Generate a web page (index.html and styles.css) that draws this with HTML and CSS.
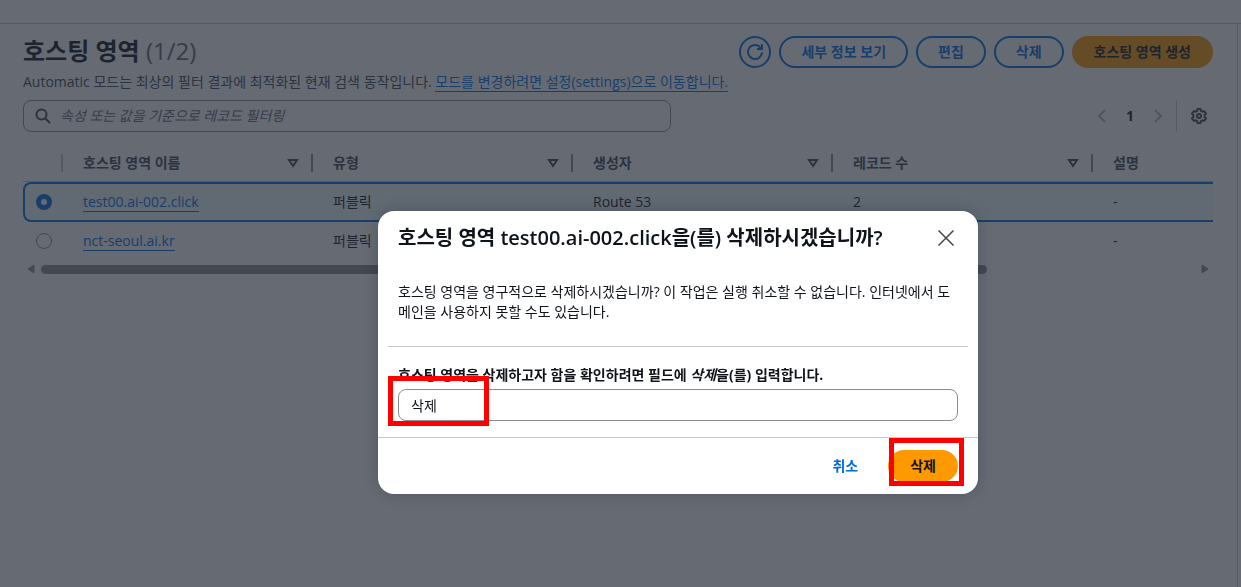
FILE: index.html
```html
<!DOCTYPE html>
<html lang="ko">
<head>
    <meta charset="utf-8">
    <title>호스팅 영역</title>
    <link rel="stylesheet" href="styles.css">
</head>
<body>

<div class="topbar"></div>

<main class="panel">
    <div class="header">
        <div class="header-text">
            <h1>호스팅 영역 <span class="counter">(1/2)</span></h1>
            <p>Automatic 모드는 최상의 필터 결과에 최적화된 현재 검색 동작입니다. <a href="#">모드를 변경하려면 설정(settings)으로 이동합니다.</a></p>
        </div>
        <div class="actions">
            <button class="btn btn-icon" type="button" aria-label="새로 고침">
                <svg width="16" height="16" viewBox="0 0 16 16"><path d="M15 8.500A7 7 0 1 1 13 3.100L15 5M15 0v5h-5"/></svg>
            </button>
            <button class="btn" type="button">세부 정보 보기</button>
            <button class="btn" type="button">편집</button>
            <button class="btn" type="button">삭제</button>
            <button class="btn btn-primary" type="button">호스팅 영역 생성</button>
        </div>
    </div>

    <div class="tools">
        <label class="filter">
            <svg width="16" height="16" viewBox="0 0 16 16"><circle cx="6.5" cy="6.5" r="5"/><path d="M10.2 10.2L15 15"/></svg>
            <input type="text" placeholder="속성 또는 값을 기준으로 레코드 필터링" aria-label="레코드 필터링">
        </label>
        <div class="pagination">
            <button class="page-arrow" type="button" aria-label="이전"><svg width="16" height="16" viewBox="0 0 16 16"><path d="M11 2L5 8l6 6"/></svg></button>
            <button class="page-number" type="button">1</button>
            <button class="page-arrow" type="button" aria-label="다음"><svg width="16" height="16" viewBox="0 0 16 16"><path d="M5 2l6 6-6 6"/></svg></button>
            <button class="settings" type="button" aria-label="설정">
                <svg width="16" height="16" viewBox="0 0 16 16"><path d="M6.600 1h2.800l.500 1.900 1.300.700 1.900-.500L15 5.500 13.600 7v2L15 10.500l-1.900 2.400-1.900-.500-1.300.700-.500 1.900H6.600l-.500-1.900-1.300-.700-1.900.500L1 10.500 2.400 9V7L1 5.500l1.900-2.400 1.900.500 1.300-.700z"/><circle cx="8" cy="8" r="2"/></svg>
            </button>
        </div>
    </div>

    <div class="table-wrap">
        <table>
            <colgroup>
                <col class="col-select"><col class="col-name"><col class="col-mid"><col class="col-mid"><col class="col-mid"><col>
            </colgroup>
            <thead>
                <tr>
                    <th class="select"><div class="th"></div></th>
                    <th><div class="th">호스팅 영역 이름<svg width="12" height="10" viewBox="0 0 12 10"><path d="M2 2h8L6 8z"/></svg></div></th>
                    <th><div class="th">유형<svg width="12" height="10" viewBox="0 0 12 10"><path d="M2 2h8L6 8z"/></svg></div></th>
                    <th><div class="th">생성자<svg width="12" height="10" viewBox="0 0 12 10"><path d="M2 2h8L6 8z"/></svg></div></th>
                    <th><div class="th">레코드 수<svg width="12" height="10" viewBox="0 0 12 10"><path d="M2 2h8L6 8z"/></svg></div></th>
                    <th><div class="th">설명</div></th>
                </tr>
            </thead>
            <tbody>
                <tr class="selected">
                    <td class="select"><input type="radio" name="zone" aria-label="test00.ai-002.click" checked></td>
                    <td><a href="#">test00.ai-002.click</a></td>
                    <td>퍼블릭</td>
                    <td>Route 53</td>
                    <td>2</td>
                    <td>-</td>
                </tr>
                <tr>
                    <td class="select"><input type="radio" name="zone" aria-label="nct-seoul.ai.kr"></td>
                    <td><a href="#">nct-seoul.ai.kr</a></td>
                    <td>퍼블릭</td>
                    <td></td>
                    <td></td>
                    <td>-</td>
                </tr>
            </tbody>
        </table>
    </div>
    <div class="scrollbar">
        <svg width="8" height="10" viewBox="0 0 8 10"><path d="M7 1v8L1 5z"/></svg>
        <div class="track"><div class="thumb"></div></div>
        <svg width="8" height="10" viewBox="0 0 8 10"><path d="M1 1v8l6-4z"/></svg>
    </div>
</main>

<div class="backdrop">
    <form class="modal" role="dialog" aria-labelledby="modal-title">
        <div class="modal-header">
            <h2 id="modal-title">호스팅 영역 test00.ai-002.click을(를) 삭제하시겠습니까?</h2>
            <button class="close" type="button" aria-label="닫기"><svg width="16" height="16" viewBox="0 0 16 16"><path d="M.5.5l15 15M15.5.5l-15 15"/></svg></button>
        </div>
        <p class="modal-text">호스팅 영역을 영구적으로 삭제하시겠습니까? 이 작업은 실행 취소할 수 없습니다. 인터넷에서 도메인을 사용하지 못할 수도 있습니다.</p>
        <div class="confirm">
            <label for="confirm">호스팅 영역을 삭제하고자 함을 확인하려면 필드에 <i>삭제</i>을(를) 입력합니다.</label>
            <div class="field">
                <input type="text" id="confirm" value="삭제">
                <span class="mark mark-input"></span>
            </div>
        </div>
        <div class="modal-footer">
            <button class="btn btn-link" type="button">취소</button>
            <div class="field">
                <button class="btn btn-primary" type="button">삭제</button>
                <span class="mark mark-button"></span>
            </div>
        </div>
    </form>
</div>

</body>
</html>
```
FILE: styles.css
```css
* {
    box-sizing: border-box;
}

body {
    margin: 0;
    min-height: 100vh;
    display: flex;
    flex-direction: column;
    overflow: hidden;
    font-family: "Open Sans", "Noto Sans CJK KR", sans-serif;
    font-size: 14px;
    line-height: 20px;
    color: #0f141a;
    background: #fff;
}

h1, h2, p {
    margin: 0;
}

button, input {
    font: inherit;
    color: inherit;
}

button {
    padding: 0;
    border: 0;
    background: none;
    cursor: pointer;
}

svg {
    display: block;
    flex: none;
    fill: none;
    stroke: currentColor;
    stroke-width: 2;
}

a {
    color: #006ce0;
    text-decoration: none;
    border-bottom: 1px solid #006ce0;
}

.topbar {
    height: 24px;
    border-bottom: 1px solid #c6c6cd;
}

.panel {
    flex: 1;
    margin-right: 3px;
    padding: 12px 24px 0 23px;
    border-right: 1px solid #c6c6cd;
}

/* title and actions */
.header {
    display: flex;
    justify-content: space-between;
    align-items: flex-start;
}

.header-text {
    white-space: nowrap;
}

h1 {
    font-size: 24px;
    line-height: 30px;
}

.counter {
    font-weight: 400;
    color: #656871;
}

.header p {
    margin-top: 6px;
    color: #424650;
}

.actions {
    display: flex;
    gap: 8px;
}

.btn {
    height: 32px;
    padding: 0 20px;
    border: 2px solid #006ce0;
    border-radius: 16px;
    font-weight: 700;
    color: #006ce0;
    white-space: nowrap;
}

.btn-icon {
    width: 32px;
    padding: 0 6px;
}

.btn-primary {
    border-color: #f90;
    background: #f90;
    color: #0f141a;
}

.btn-link {
    border-color: transparent;
}

/* filter and paging */
.tools {
    display: flex;
    justify-content: space-between;
    margin-top: 8px;
}

.filter {
    display: flex;
    align-items: center;
    gap: 9px;
    flex: 0 1 648px;
    height: 32px;
    padding: 0 11px;
    border: 1px solid #8c8c94;
    border-radius: 8px;
    color: #424650;
}

.filter input {
    flex: 1;
    padding: 0;
    border: 0;
    outline: 0;
    background: none;
}

.filter input::placeholder {
    color: #656871;
    font-style: italic;
    opacity: 1;
}

.pagination {
    display: flex;
    align-items: center;
    height: 32px;
}

.page-arrow {
    color: #b4b4bb;
}

.page-number {
    width: 40px;
    font-weight: 700;
}

.settings {
    height: 32px;
    margin-left: 10px;
    padding: 0 6px 0 14px;
    border-left: 1px solid #c6c6cd;
    color: #424650;
}

/* zones */
.table-wrap {
    margin-top: 12px;
    overflow: hidden;
}

table {
    width: 1464px;
    table-layout: fixed;
    border-collapse: separate;
    border-spacing: 0;
}

.col-select {
    width: 40px;
}

.col-name {
    width: 250px;
}

.col-mid {
    width: 260px;
}

th {
    height: 38px;
    padding: 0 0 0 20px;
    text-align: left;
    color: #424650;
    border-bottom: 1px solid #c6c6cd;
}

.th {
    display: flex;
    align-items: center;
    justify-content: space-between;
    height: 18px;
    padding-right: 12px;
    border-right: 2px solid #8c8c94;
}

.select .th {
    border-color: #c6c6cd;
}

td {
    height: 38px;
    padding: 0 20px;
}

td.select {
    padding: 0 0 0 13px;
}

.selected td {
    height: 40px;
    border-top: 2px solid #006ce0;
    border-bottom: 2px solid #006ce0;
    background: #f0fbff;
}

.selected td.select {
    padding-left: 11px;
    border-left: 2px solid #006ce0;
    border-radius: 8px 0 0 8px;
}

input[type=radio] {
    appearance: none;
    display: block;
    width: 16px;
    height: 16px;
    margin: 0;
    border: 1px solid #8c8c94;
    border-radius: 50%;
}

input[type=radio]:checked {
    border: 5px solid #006ce0;
    background: #fff;
}

.scrollbar {
    display: flex;
    align-items: center;
    gap: 6px;
    margin-top: 4px;
    padding: 0 4px;
}

.scrollbar svg {
    fill: #8c8c94;
    stroke: #8c8c94;
    stroke-width: 1;
}

.track {
    flex: 1;
}

.thumb {
    width: 82%;
    height: 9px;
    border-radius: 5px;
    background: #8c8c94;
}

/* delete dialog */
.backdrop {
    position: fixed;
    inset: 0;
    display: flex;
    justify-content: center;
    align-items: flex-start;
    padding: 211px 0 0 115px;
    background: rgba(35, 43, 55, 0.7);
}

.modal {
    width: 600px;
    border-radius: 16px;
    background: #fff;
    box-shadow: 0 0 16px rgba(0, 7, 22, 0.2);
}

.modal-header {
    display: flex;
    justify-content: space-between;
    padding: 15px 24px 0 20px;
}

h2 {
    font-size: 20px;
    font-weight: 600;
    line-height: 24px;
}

.close {
    color: #424650;
}

.close svg {
    stroke-width: 1.5;
}

.modal-text {
    margin: 0 10px;
    padding: 32px 10px 24px;
    border-bottom: 1px solid #c6c6cd;
    word-break: break-all;
}

.confirm {
    padding: 18px 20px 16px;
    border-bottom: 1px solid #c6c6cd;
}

.confirm label {
    display: block;
    margin-bottom: 4px;
    font-weight: 700;
}

.field {
    position: relative;
}

.confirm input {
    display: block;
    width: 100%;
    height: 32px;
    padding: 0 12px;
    border: 1px solid #8c8c94;
    border-radius: 8px;
    outline: 0;
}

.modal-footer {
    display: flex;
    justify-content: flex-end;
    gap: 8px;
    padding: 12px 20px;
}

/* red highlights over the controls */
.mark {
    position: absolute;
    border: 5px solid #f00;
    pointer-events: none;
}

.mark-input {
    top: -13px;
    left: -10px;
    width: 101px;
    height: 50px;
}

.mark-button {
    top: -12px;
    right: -6px;
    width: 75px;
    height: 48px;
}
```
